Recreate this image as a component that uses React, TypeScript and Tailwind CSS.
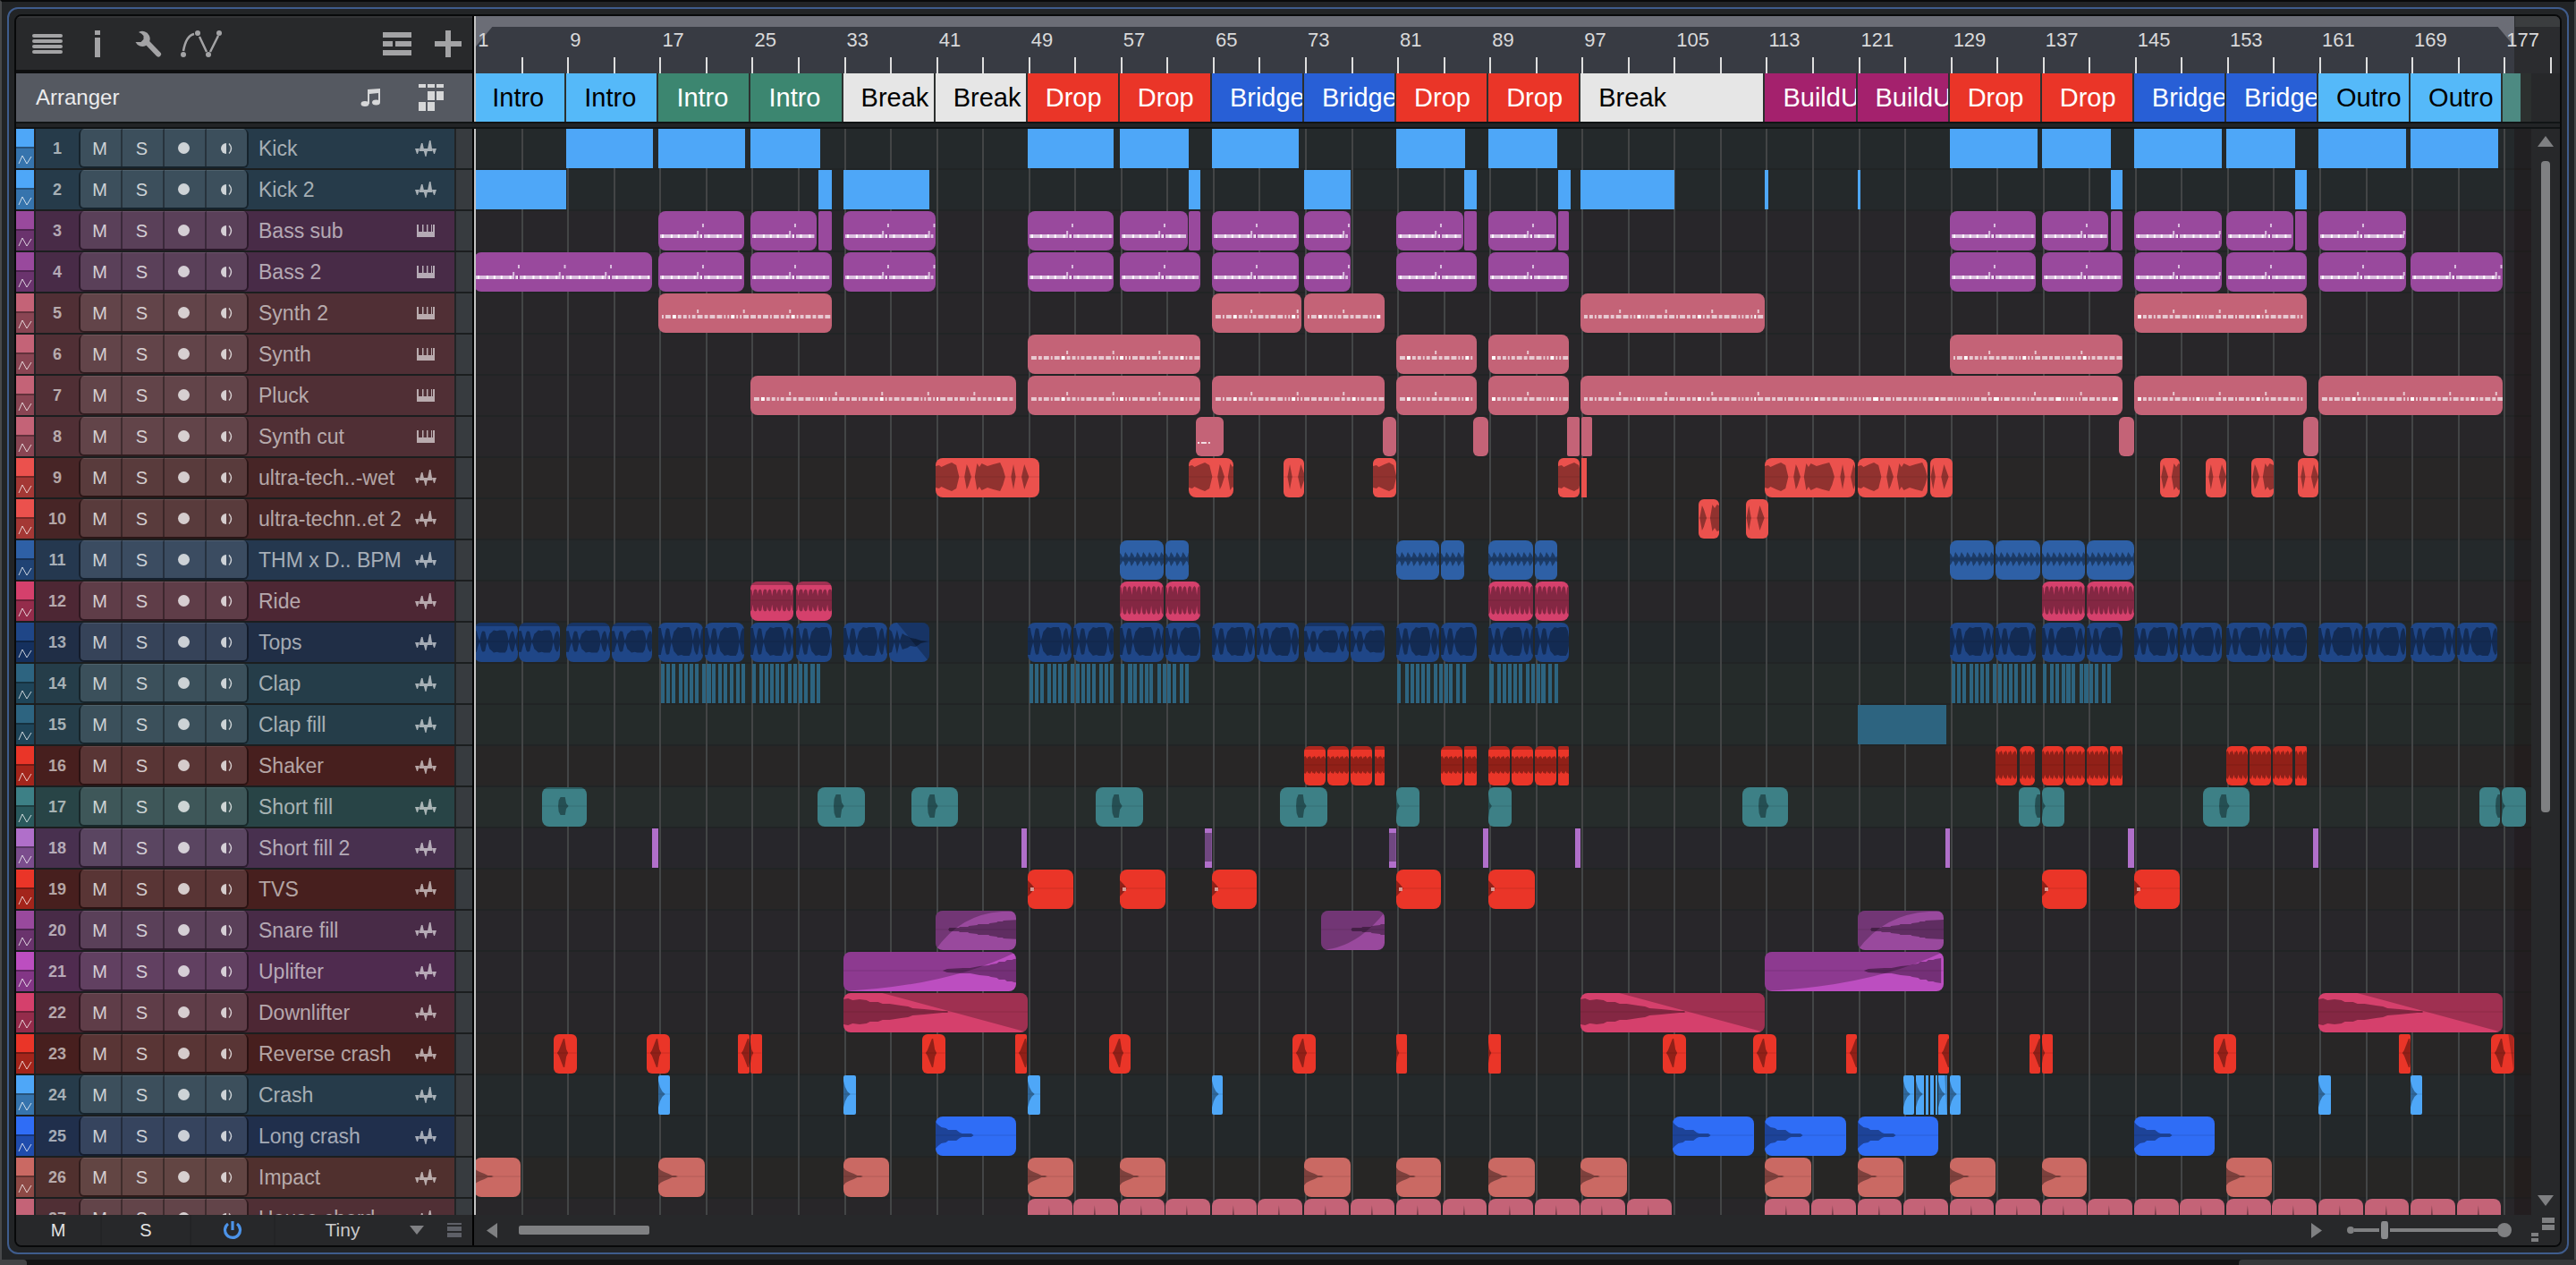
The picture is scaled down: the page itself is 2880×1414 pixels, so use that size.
import React, { useState } from "react";

type Shape =
  | "block"
  | "bass"
  | "synth"
  | "vox"
  | "pulse"
  | "ride"
  | "tops"
  | "shaker"
  | "shortFill"
  | "sliver"
  | "tvs"
  | "snare"
  | "uplifter"
  | "downlifter"
  | "reverse"
  | "crash"
  | "longCrash"
  | "impact"
  | "chord";

// start bar, end bar, variant, offset into the source in bars
type Clip = [number, number, string?, number?];

type Track = {
  name: string;
  tone: string;
  shape: Shape;
  midi?: boolean;
  clips: Clip[];
};

type Tone = { clip: string; head: string; lane: string };

const FIRST_BAR = 1.14;
const VISIBLE_BARS = 178.33;
const UNIT = 13; // drawing units per bar
const MID = 21;

const pos = (bar: number) => `${((bar - FIRST_BAR) / VISIBLE_BARS) * 100}%`;
const span = (bars: number) => `${(bars / VISIBLE_BARS) * 100}%`;

const tones: Record<string, Tone> = {
  sky: { clip: "bg-[#4ea7f8]", head: "bg-[#263b4a]", lane: "bg-[#24292b]" },
  purple: { clip: "bg-[#99499d]", head: "bg-[#482b47]", lane: "bg-[#28262a]" },
  pink: { clip: "bg-[#c46377]", head: "bg-[#502f35]", lane: "bg-[#282629]" },
  coral: { clip: "bg-[#eb514d]", head: "bg-[#472526]", lane: "bg-[#282626]" },
  denim: { clip: "bg-[#2e60a6]", head: "bg-[#25384f]", lane: "bg-[#24292b]" },
  rose: { clip: "bg-[#d5406c]", head: "bg-[#4d2734]", lane: "bg-[#282629]" },
  navy: { clip: "bg-[#1f4687]", head: "bg-[#202e46]", lane: "bg-[#23282a]" },
  steel: { clip: "bg-[#2d6480]", head: "bg-[#253d49]", lane: "bg-[#252b2a]" },
  red: { clip: "bg-[#ea3528]", head: "bg-[#471f1e]", lane: "bg-[#282626]" },
  teal: { clip: "bg-[#3d8086]", head: "bg-[#284446]", lane: "bg-[#262c2b]" },
  lilac: { clip: "bg-[#b06fca]", head: "bg-[#48304f]", lane: "bg-[#27262b]" },
  magenta: { clip: "bg-[#bc4ec0]", head: "bg-[#4f2b4f]", lane: "bg-[#28262a]" },
  royal: { clip: "bg-[#2f6df6]", head: "bg-[#202f4c]", lane: "bg-[#23282a]" },
  salmon: { clip: "bg-[#ca6963]", head: "bg-[#50302e]", lane: "bg-[#272625]" },
};

const clapA = [0.2, 0.65, 1.1, 1.75, 2.2, 2.65, 3.15, 3.75, 4.2, 4.65, 5.15, 5.6, 6.2, 6.7, 7.15];
const clapB = [0.1, 0.75, 1.2, 1.7, 2.15, 2.6, 3.25, 3.7, 4.15, 4.6, 5.2, 5.7];

const claps = (bar: number, offsets: number[]): Clip[] =>
  offsets.map((o) => [bar + o, bar + o + 0.32]);

const every4 = (from: number, to: number): Clip[] => {
  const out: Clip[] = [];
  for (let b = from; b <= to; b += 4) out.push([b, b + 3.87]);
  return out;
};

const tracks: Track[] = [
  {
    name: "Kick", tone: "sky", shape: "block",
    clips: [[9, 16.5], [17, 24.5], [25, 31], [49, 56.5], [57, 63], [65, 72.5], [81, 87], [89, 95], [129, 136.6], [137, 143], [145, 152.6], [153, 159], [161, 168.6], [169, 176.6]],
  },
  {
    name: "Kick 2", tone: "sky", shape: "block",
    clips: [[1, 9], [30.9, 32], [33, 40.5], [63, 64], [73, 77], [86.9, 88], [95, 96.1], [97, 105.1], [113, 113.3], [121, 121.3], [143, 144], [159, 160]],
  },
  {
    name: "Bass sub", tone: "purple", shape: "bass", midi: true,
    clips: [[17, 24.4], [25, 30.7], [30.9, 32, "plain"], [33, 41], [49, 56.5], [57, 62.9], [63, 64, "plain"], [65, 72.5], [73, 77], [81, 86.8], [86.9, 88, "plain"], [89, 94.9], [95, 96, "plain"], [129, 136.5], [137, 142.8], [143, 144, "plain"], [145, 152.6], [153, 158.8], [159, 160, "plain"], [161, 168.6]],
  },
  {
    name: "Bass 2", tone: "purple", shape: "bass", midi: true,
    clips: [[1, 16.4], [17, 24.4], [25, 32], [33, 41], [49, 56.5], [57, 64], [65, 72.5], [73, 77], [81, 88], [89, 96], [129, 136.5], [137, 144], [145, 152.6], [153, 160], [161, 168.6], [169, 177]],
  },
  {
    name: "Synth 2", tone: "pink", shape: "synth", midi: true,
    clips: [[17, 32], [65, 72.8], [73, 80], [97, 113], [145, 160]],
  },
  {
    name: "Synth", tone: "pink", shape: "synth", midi: true,
    clips: [[49, 64], [81, 88], [89, 96], [129, 144]],
  },
  {
    name: "Pluck", tone: "pink", shape: "synth", midi: true,
    clips: [[25, 48], [49, 64], [65, 80], [81, 88], [89, 96], [97, 144], [145, 160], [161, 177]],
  },
  {
    name: "Synth cut", tone: "pink", shape: "block", midi: true,
    clips: [[63.6, 66, "note"], [79.8, 81], [87.7, 89], [95.8, 96.9], [97.05, 98], [143.7, 145], [159.7, 161]],
  },
  {
    name: "ultra-tech..-wet", tone: "coral", shape: "vox",
    clips: [[41, 50], [63, 66.9], [71.2, 73, "", 6.2], [79, 81], [95, 96.9], [97.05, 97.5, "plain"], [113, 120.8], [121, 127.1], [127.3, 129.3, "", 6.5], [147.3, 149, "", 2.4], [151.2, 153, "", 6.3], [155.2, 157.1, "", 2.4], [159.2, 161, "", 6.3]],
  },
  {
    name: "ultra-techn..et 2", tone: "coral", shape: "vox",
    clips: [[107.2, 109, "", 2.4], [111.3, 113.3, "", 6.5]],
  },
  {
    name: "THM x D.. BPM", tone: "denim", shape: "pulse",
    clips: [[57, 60.85], [61, 63], [81, 84.75], [84.9, 86.9], [89, 92.85], [93, 95], [129, 132.85], [133, 136.85], [137, 140.75], [140.9, 145]],
  },
  {
    name: "Ride", tone: "rose", shape: "ride",
    clips: [[25, 28.7, "low"], [28.9, 32, "low"], [57, 60.85], [61, 64], [89, 92.85], [93, 96], [137, 140.75], [140.9, 145]],
  },
  {
    name: "Tops", tone: "navy", shape: "tops",
    clips: [[1, 4.75, "low"], [4.9, 8.4, "low"], [9, 12.75, "low"], [12.9, 16.4, "low"], [17, 20.85], [21, 24.4], [25, 28.7], [28.9, 32], [33, 36.85], [37, 40.5, "fade"], [49, 52.85], [53, 56.5], [57, 60.85], [61, 64], [65, 68.7], [68.9, 72.5], [73, 76.85, "low"], [77, 80, "low"], [81, 84.75], [84.9, 88], [89, 92.85], [93, 96], [129, 132.85], [133, 136.5], [137, 140.75], [140.9, 144], [145, 148.85], [149, 152.6], [153, 156.85], [157, 160], [161, 164.85], [165, 168.6], [169, 172.85], [173, 176.5]],
  },
  {
    name: "Clap", tone: "steel", shape: "block",
    clips: [...claps(17, clapA), ...claps(25, clapB), ...claps(49, clapA), ...claps(57, clapB), ...claps(81, clapB), ...claps(89, clapB), ...claps(129, clapA), ...claps(137, clapB)],
  },
  { name: "Clap fill", tone: "steel", shape: "block", clips: [[121, 128.7]] },
  {
    name: "Shaker", tone: "red", shape: "shaker",
    clips: [[73, 74.85, "low"], [75, 76.85, "low"], [77, 78.9, "low"], [79.1, 80, "low"], [84.9, 86.75, "low"], [86.9, 88, "low"], [89, 90.85, "low"], [91, 92.85, "low"], [93, 94.85, "low"], [95.05, 96, "low"], [133, 134.85], [135.05, 136.4], [137, 138.85], [139.05, 140.75], [140.9, 142.75], [142.95, 144], [153, 154.85], [155.05, 156.85], [157.05, 158.75], [158.95, 160]],
  },
  {
    name: "Short fill", tone: "teal", shape: "shortFill",
    clips: [[6.9, 10.8, "low"], [30.8, 34.9], [38.9, 43], [54.9, 59], [70.9, 75], [81, 83, "", 2], [89, 91, "", 2], [111, 115], [135, 136.85], [137, 139, "", 2], [151, 155], [175, 176.75], [176.9, 179, "", 2]],
  },
  {
    name: "Short fill 2", tone: "lilac", shape: "sliver",
    clips: [[16.45, 16.95], [48.45, 48.95], [64.4, 65, "dark"], [80.4, 81, "dark"], [88.5, 88.95], [96.55, 97], [128.65, 129], [144.5, 145], [160.5, 161]],
  },
  {
    name: "TVS", tone: "red", shape: "tvs",
    clips: [[49, 53], [57, 61], [65, 68.9], [81, 84.9], [89, 93], [137, 140.9], [145, 149]],
  },
  {
    name: "Snare fill", tone: "purple", shape: "snare",
    clips: [[41, 48], [74.5, 80, "late"], [121, 128.5]],
  },
  { name: "Uplifter", tone: "magenta", shape: "uplifter", clips: [[33, 48], [113, 128.5]] },
  { name: "Downlifter", tone: "rose", shape: "downlifter", clips: [[33, 49], [97, 113], [161, 177]] },
  {
    name: "Reverse crash", tone: "red", shape: "reverse",
    clips: [[7.9, 9.9], [16, 18], [23.9, 24.85], [25, 25.95, "", 1], [39.9, 41.9], [47.95, 48.95], [56.05, 57.95], [72, 74], [81, 81.9, "", 1], [89, 90.1, "", 1], [104.1, 106.1], [111.95, 113.95], [120, 120.95], [128, 128.95], [135.9, 136.85], [137, 137.95, "", 1], [151.9, 153.9], [167.95, 169], [176, 178, "fade"]],
  },
  {
    name: "Crash", tone: "sky", shape: "crash",
    clips: [[17, 18], [33, 34.1], [49, 50.1], [65, 65.95], [125, 125.9], [126.05, 126.8], [126.95, 127.15, "plain"], [127.3, 127.6, "plain"], [127.75, 127.95, "plain"], [128.05, 128.8, "fade"], [129, 129.95], [161, 162.1], [169, 170]],
  },
  {
    name: "Long crash", tone: "royal", shape: "longCrash",
    clips: [[41, 48], [105, 112], [113, 120], [121, 128], [145, 152]],
  },
  {
    name: "Impact", tone: "salmon", shape: "impact",
    clips: [[1, 5], [17, 21], [33, 37], [49, 53], [57, 61], [73, 77], [81, 84.9], [89, 93], [97, 101], [113, 117], [121, 125], [129, 133], [137, 140.9], [153, 157]],
  },
  { name: "House chord", tone: "pink", shape: "chord", clips: [...every4(49, 101), ...every4(113, 173)] },
];

const sections: [number, number, string, string][] = [
  [1, 9, "Intro", "bg-[#55b9f9] text-black"],
  [9, 17, "Intro", "bg-[#55b9f9] text-black"],
  [17, 25, "Intro", "bg-[#3c8670] text-white"],
  [25, 33, "Intro", "bg-[#3c8670] text-white"],
  [33, 41, "Break", "bg-[#e6e6e6] text-black"],
  [41, 49, "Break", "bg-[#e6e6e6] text-black"],
  [49, 57, "Drop", "bg-[#ea3528] text-white"],
  [57, 65, "Drop", "bg-[#ea3528] text-white"],
  [65, 73, "Bridge", "bg-[#285fd6] text-white"],
  [73, 81, "Bridge", "bg-[#285fd6] text-white"],
  [81, 89, "Drop", "bg-[#ea3528] text-white"],
  [89, 97, "Drop", "bg-[#ea3528] text-white"],
  [97, 113, "Break", "bg-[#e6e6e6] text-black"],
  [113, 121, "BuildUp", "bg-[#a4216d] text-white"],
  [121, 129, "BuildUp", "bg-[#a4216d] text-white"],
  [129, 137, "Drop", "bg-[#ea3528] text-white"],
  [137, 145, "Drop", "bg-[#ea3528] text-white"],
  [145, 153, "Bridge", "bg-[#285fd6] text-white"],
  [153, 161, "Bridge", "bg-[#285fd6] text-white"],
  [161, 169, "Outro", "bg-[#55b9f9] text-black"],
  [169, 177, "Outro", "bg-[#55b9f9] text-black"],
  [177, 178.2, "", "bg-[#4d8a82]"],
];

// amplitude envelopes: [bar, height above the centre line]
type Envelope = { period: number; pts: [number, number][] };

const envelopes: Partial<Record<Shape, Envelope>> = {
  vox: {
    period: 99,
    pts: [[0, 12], [0.3, 13], [0.5, 11], [1, 14], [1.4, 16], [1.8, 13], [2.05, 0], [2.5, 0], [2.7, 14], [2.85, 10], [3.1, 0], [3.4, 0], [3.6, 15], [3.8, 11], [4, 15], [4.5, 12], [5, 14], [5.6, 16], [5.85, 9], [6.05, 0], [6.55, 0], [6.75, 14], [6.95, 0], [7.45, 0], [7.7, 14], [8.1, 0]],
  },
  pulse: { period: 0.52, pts: [[0, 7], [0.12, 5], [0.24, 2], [0.36, 3], [0.44, 7], [0.52, 8]] },
  ride: { period: 0.84, pts: [[0, 16], [0.12, 14], [0.2, 6], [0.28, 14], [0.4, 16], [0.55, 15], [0.62, 9], [0.7, 14], [0.84, 16]] },
  tops: {
    period: 4,
    pts: [[0, 15], [0.22, 15], [0.32, 8], [0.48, 1], [0.65, 13], [0.75, 15], [0.95, 14], [1.05, 6], [1.15, 1], [1.35, 11], [1.5, 13], [1.7, 16], [2, 15], [2.2, 16], [2.7, 16], [2.85, 12], [3, 1], [3.15, 11], [3.3, 15], [3.42, 14], [3.6, 2], [3.75, 13], [3.85, 15], [4, 15]],
  },
  shaker: { period: 0.4, pts: [[0, 14], [0.08, 16], [0.16, 15], [0.26, 11], [0.34, 15], [0.4, 14]] },
  shortFill: { period: 99, pts: [[1.4, 0], [1.45, 8], [1.6, 13], [2, 13], [2.1, 4], [2.3, 0]] },
  tvs: { period: 99, pts: [[0, 9], [0.3, 5], [0.5, 2], [0.6, 0]] },
  snare: { period: 99, pts: [[1.1, 0], [1.2, 2], [2, 2], [2.1, 3], [2.8, 3], [2.9, 4], [3.6, 5], [3.7, 6], [4.6, 6], [4.7, 7], [5.3, 8], [5.4, 9], [5.8, 9], [5.9, 10], [7.5, 11]] },
  uplifter: { period: 99, pts: [[8.6, 0], [9, 2], [10.4, 3], [11, 3], [11.8, 5], [12.6, 6], [12.8, 7], [13.3, 8], [13.5, 10], [14, 10], [14.2, 12], [14.6, 12], [14.8, 13], [15.3, 14]] },
  downlifter: { period: 99, pts: [[0, 14], [0.4, 15], [0.8, 13], [1.4, 14], [2, 13], [2.3, 11], [3, 11], [3.4, 9], [4, 9], [4.5, 8], [5, 7], [5.6, 6], [6, 4], [7, 3], [7.8, 2], [8.6, 1], [9, 1], [9.1, 0]] },
  reverse: { period: 99, pts: [[0.3, 0], [0.45, 3], [0.85, 16], [0.95, 16], [1.1, 4], [1.25, 0]] },
  crash: { period: 99, pts: [[0, 15], [0.15, 8], [0.35, 3], [0.6, 0]] },
  longCrash: { period: 99, pts: [[0, 15], [0.2, 12], [0.5, 9], [0.9, 8], [1.1, 6], [1.8, 6], [2.1, 3], [2.3, 2], [3.1, 2], [3.3, 0]] },
  impact: { period: 99, pts: [[0, 10], [0.2, 7], [0.5, 5], [0.9, 3], [1.2, 1], [1.5, 1], [1.7, 0]] },
  chord: { period: 99, pts: [[1.75, 0], [1.85, 14], [1.95, 0]] },
};

const wavePath = (env: Envelope, len: number, offset: number, scale: number) => {
  const top: string[] = [];
  const bottom: string[] = [];
  for (let base = 0; base < len + offset; base += env.period) {
    env.pts.forEach(([x, a]) => {
      const px = ((base + x - offset) * UNIT).toFixed(1);
      top.push(`${px},${(MID - a * scale).toFixed(1)}`);
      bottom.unshift(`${px},${(MID + a * scale).toFixed(1)}`);
    });
  }
  return [...top, ...bottom].join(" ");
};

const BassNotes = ({ start, end }: { start: number; end: number }) => {
  const w = (end - start) * UNIT;
  const marks: React.ReactNode[] = [];
  for (let x = 4, i = 0; x < w - 4; x += i % 3 === 0 ? 10 : 8, i++) {
    marks.push(<rect key={`m${i}`} x={x} y={26} width={2} height={4} fill="#fff" />);
  }
  for (let b = Math.floor(start / 4) * 4; b < end; b += 4) {
    const low = (b + 0.35 - start) * UNIT;
    const high = (b + 0.8 - start) * UNIT;
    if (low > 0 && low < w - 2) {
      marks.push(<rect key={`l${b}`} x={low} y={22} width={2} height={4} fill="#dcc0e0" />);
      marks.push(<rect key={`g${b}`} x={low + 2} y={26} width={1} height={4} fill="#99499d" />);
    }
    if (high > 0 && high < w - 2) {
      marks.push(<rect key={`h${b}`} x={high} y={14} width={2} height={4} fill="#dcc0e0" />);
      marks.push(<rect key={`k${b}`} x={high} y={26} width={2} height={4} fill="#99499d" />);
    }
  }
  return (
    <>
      <rect x={2} y={26} width={w - 4} height={4} fill="#dcc0e0" />
      {marks}
    </>
  );
};

const noteWidths = [6, 4, 6, 2, 6, 4, 4, 4, 2, 4, 6, 4, 6, 6, 2, 2, 4, 2, 2, 6];

const SynthNotes = ({ start, end }: { start: number; end: number }) => {
  const w = (end - start) * UNIT;
  const marks: React.ReactNode[] = [];
  for (let x = 4, i = start % 7; x < w - 5; i++) {
    const n = noteWidths[i % noteWidths.length];
    marks.push(<rect key={x} x={x} y={24} width={n} height={4} fill={i % 11 === 5 ? "#fff" : "#e8c8d0"} />);
    x += n + 2;
  }
  for (let b = Math.floor(start / 4) * 4; b < end; b += 4) {
    const x = (b + 0.35 - start) * UNIT;
    const silent = b > 112 && b < 132 && end - start > 40;
    if (x > 0 && x < w - 2 && !silent) {
      marks.push(<rect key={`b${b}`} x={x} y={18} width={2} height={4} fill="#e8c8d0" />);
    }
  }
  return <>{marks}</>;
};

const Fade = ({ shape, variant, w }: { shape: Shape; variant: string; w: number }) => {
  let d = "";
  if (shape === "snare") {
    d = variant === "late" ? `M0 44Q${w * 0.55} 42 ${w} 2V0H0z` : `M0 44Q${w * 0.3} 4 ${w * 0.82} 1H${w}V0H0z`;
  } else if (shape === "uplifter") d = `M0 44Q${w * 0.6} 38 ${w} 0H0z`;
  else if (shape === "downlifter") d = `M${w * 0.21} 0L${w} 44V0z`;
  else if (shape === "tops") d = `M9 0L${w} 44V0z`;
  else if (variant === "fade") d = `M${w * 0.75} 0L${w} 44V0z`;
  return <path d={d} fill="#000" fillOpacity={0.25} />;
};

const ClipView = ({ clip, track }: { clip: Clip; track: Track }) => {
  const [start, end, variant = "", offset = 0] = clip;
  const len = end - start;
  const w = len * UNIT;
  const { shape } = track;
  const env = envelopes[shape];
  let scale = 1;
  if (variant === "low") scale = shape === "shaker" ? 0.62 : 0.78;

  let radius = "rounded-lg";
  if (len < 0.8) radius = "rounded-none";
  else if (len < 1.2) radius = "rounded-xs";
  else if (len < 3) radius = "rounded-md";
  if (shape === "block" && !track.midi) radius = "rounded-none";

  return (
    <div
      className={`absolute top-0 z-10 h-11 overflow-hidden ${radius} ${tones[track.tone].clip}`}
      style={{ left: pos(start), width: span(len) }}
    >
      {variant !== "plain" && (
        <svg viewBox={`0 0 ${w} 44`} preserveAspectRatio="none" className="block h-full w-full" aria-hidden="true">
          {shape === "bass" && <BassNotes start={start} end={end} />}
          {shape === "synth" && <SynthNotes start={start} end={end} />}
          {variant === "note" && <path d="M2 28h2v2h-2zM6 28h6v2h-6zM14 28h2v2h-2z" fill="#f3dde2" />}
          {variant === "dark" && <rect y={5} width={w} height={32} fill="#000" fillOpacity={0.36} />}
          {env && (
            <>
              <rect y={MID - 0.5} width={w} height={1} fill="#000" fillOpacity={0.12} />
              <polygon
                points={
                  shape === "tops" && variant === "fade"
                    ? "0,7 3,10 6,20 9,8 12,20 15,12 18,14 21,15 24,17 30,18 36,20 44,21 36,23 30,27 24,26 21,28 15,30 12,22 9,35 6,22 3,33 0,34"
                    : wavePath(env, len, variant === "late" ? -1.5 : offset, scale)
                }
                fill="#000"
                fillOpacity={0.38}
              />
            </>
          )}
          {shape === "tvs" && <rect x={3} y={20} width={4} height={4} fill="#d59a94" />}
          {variant === "low" && <rect width={w} height={shape === "shortFill" ? 2 : 4} fill="#000" fillOpacity={0.25} />}
          <Fade shape={shape === "tops" && variant !== "fade" ? "block" : shape} variant={variant} w={w} />
        </svg>
      )}
    </div>
  );
};

const WaveIcon = () => (
  <svg viewBox="0 0 24 18" className="h-[18px] w-6" fill="currentColor" aria-hidden="true">
    <path d="M0 9h5L3 15H2zM4.500 12L7 3h1.500L10.500 12zM9 9h5.500L12.500 18h-1zM13.500 12L16 0h1.500L19.500 12zM19 9h5L22 15h-1z" />
  </svg>
);

const KeysIcon = () => (
  <svg viewBox="0 0 20 14" className="h-[14px] w-5" fill="currentColor" aria-hidden="true">
    <path d="M0 0h2v8h4V0h1.500v8h3.500V0h1.500v8h3.500V0H17v8h1V0h2v14H0z" />
  </svg>
);

const ToggleButton = ({ label, children }: { label: string; children: React.ReactNode }) => {
  const [on, setOn] = useState(false);
  return (
    <button
      aria-label={label}
      aria-pressed={on}
      onClick={() => setOn(!on)}
      className="flex flex-1 items-center justify-center border-t border-r-2 border-black/35 border-t-white/10 bg-white/10 pr-0.5 text-[20px] leading-none text-white/75 last:border-r-0"
    >
      {children}
    </button>
  );
};

const TrackHeader = ({ track, index }: { track: Track; index: number }) => {
  const tone = tones[track.tone];
  return (
    <div className="flex h-[46px] shrink-0 border-b-2 border-[#1b1e1f]">
      <div className={`flex w-5 flex-col ${tone.clip}`}>
        <div className="h-5" />
        <div className="h-0.5 bg-black/50" />
        <div className="flex flex-1 items-center justify-center bg-black/30">
          <svg viewBox="0 0 16 12" className="mt-1 h-3 w-4" fill="none" stroke="white" strokeOpacity={0.75} strokeWidth={1} aria-hidden="true">
            <path d="M1 10L5 1l5 9 5-8" />
          </svg>
        </div>
      </div>
      <div className={`ml-0.5 flex flex-1 items-center ${tone.head}`}>
        <span className="w-12 text-center text-[18px] leading-[44px] font-bold text-white/60">{index}</span>
        <div className="flex h-full w-[190px] overflow-hidden rounded-md border-x-2 border-b-2 border-black/40">
          <ToggleButton label={`Mute ${track.name}`}>M</ToggleButton>
          <ToggleButton label={`Solo ${track.name}`}>S</ToggleButton>
          <ToggleButton label={`Record ${track.name}`}>
            <span className="size-[13px] rounded-full bg-white/75" />
          </ToggleButton>
          <ToggleButton label={`Monitor ${track.name}`}>
            <svg viewBox="0 0 14 14" className="size-[14px]" aria-hidden="true">
              <path d="M7 1a6 6 0 0 0 0 12z" fill="currentColor" />
              <path d="M10 1.500q5 5.500 0 11" fill="none" stroke="currentColor" strokeWidth={1.400} />
            </svg>
          </ToggleButton>
        </div>
        <span className="ml-[11px] flex-1 text-[23px] leading-[44px] whitespace-nowrap text-white/60">{track.name}</span>
        <span className="mr-5 flex w-6 justify-center text-white/60">{track.midi ? <KeysIcon /> : <WaveIcon />}</span>
      </div>
      <div className="ml-0.5 w-[18px] bg-[#373b3f]" />
    </div>
  );
};

const ToolButton = ({ label, className, children }: { label: string; className: string; children: React.ReactNode }) => (
  <button aria-label={label} className={`shrink-0 text-[#a3a3a5] ${className}`}>
    {children}
  </button>
);

const Toolbar = () => (
  <div className="flex h-[60px] items-center border-t-2 border-[#343537] bg-[#28292b] pr-3 pl-[18px]">
    <ToolButton label="Menu" className="w-[34px]">
      <svg viewBox="0 0 34 24" className="h-6 w-full" fill="currentColor">
        <rect width="34" height="4" rx="2" y="1" />
        <rect width="34" height="4" rx="2" y="7" />
        <rect width="34" height="4" rx="2" y="13" />
        <rect width="34" height="4" rx="2" y="19" />
      </svg>
    </ToolButton>
    <ToolButton label="Inspector" className="ml-9 w-[6px]">
      <svg viewBox="0 0 6 30" className="h-[30px] w-full" fill="currentColor">
        <path d="M0 0h6v5H0zM0 8h6v22H0z" />
      </svg>
    </ToolButton>
    <ToolButton label="Options" className="ml-[39px] w-[30px]">
      <svg viewBox="0 0 30 30" className="h-[30px] w-full">
        <path d="M13 13L26 26.500" stroke="currentColor" strokeWidth="6" strokeLinecap="round" />
        <path d="M4 2a8.500 8.500 0 1 1-3.500 11h6l3-3V6L7 3.500z" fill="currentColor" />
      </svg>
    </ToolButton>
    <ToolButton label="Automation" className="ml-[21px] w-[46px]">
      <svg viewBox="0 0 46 30" className="h-[30px] w-full" fill="currentColor">
        <path d="M3 23Q6 6 15 4M21 7l8 17M33 24L42 6" fill="none" stroke="currentColor" strokeWidth="2.500" />
        <circle cx="3" cy="27" r="3" />
        <circle cx="19" cy="3" r="3" />
        <circle cx="31" cy="27" r="3" />
        <circle cx="43" cy="3" r="3" />
      </svg>
    </ToolButton>
    <div className="flex-1" />
    <ToolButton label="Track list" className="w-8">
      <svg viewBox="0 0 32 26" className="h-[26px] w-full" fill="currentColor">
        <path d="M0 0h32v6H0zM0 10h11v6H0zM14 10h18v6H14zM0 20h32v6H0z" />
      </svg>
    </ToolButton>
    <ToolButton label="Add track" className="ml-[26px] w-[30px]">
      <svg viewBox="0 0 30 30" className="h-[30px] w-full" fill="currentColor">
        <path d="M12 0h6v12h12v6H18v12h-6V18H0v-6h12z" />
      </svg>
    </ToolButton>
  </div>
);

const Ruler = () => {
  const labels = Array.from({ length: 23 }, (_, i) => 1 + i * 8);
  const ticks = Array.from({ length: 45 }, (_, i) => 5 + i * 4);
  return (
    <div className="h-16 bg-[#2b2c2f]">
      <div className="relative mr-8 h-full">
        <div className="absolute inset-y-0 left-0 border-t-[12px] border-[#6b6d76] bg-[#383b43]" style={{ width: pos(178) }}>
          <svg viewBox="0 0 20 24" className="absolute -top-0.5 left-0 h-6 w-5" aria-hidden="true">
            <path d="M0 0h20L0 24z" fill="#6b6d76" />
          </svg>
          <svg viewBox="0 0 20 24" className="absolute -top-0.5 right-0 h-6 w-5" aria-hidden="true">
            <path d="M20 0H0l20 24z" fill="#6b6d76" />
          </svg>
        </div>
        <div className="absolute top-0 left-full -mr-8 -ml-[18px] h-3 w-[50px] bg-[#3b3d3f]" />
        {labels.map((b) => (
          <span key={b} className="absolute top-[15px] ml-1 text-[22px] leading-6 text-[#d9d9da]" style={{ left: pos(b) }}>
            {b}
          </span>
        ))}
        {ticks.map((b) => (
          <span key={b} className="absolute bottom-0 ml-px h-[18px] w-0.5 bg-[#dedede]" style={{ left: pos(b) }} />
        ))}
      </div>
    </div>
  );
};

const Footer = () => (
  <div className="flex h-[34px] shrink-0 bg-[#27282a]">
    <div className="flex w-[510px] items-center text-[20px] text-[#e2e2e3]">
      <button className="h-full w-[96px] border-r-2 border-[#232426]">M</button>
      <button className="h-full w-[100px] border-r-2 border-[#232426]">S</button>
      <button aria-label="Enable automation" className="flex h-full w-[94px] items-center justify-center border-r-2 border-[#232426] text-[#4c93e8]">
        <svg viewBox="0 0 22 22" className="size-[22px]" fill="none" stroke="currentColor" strokeWidth={3.200}>
          <path d="M6 4a8.500 8.500 0 1 0 10 0M11 1v10" />
        </svg>
      </button>
      <label htmlFor="track-height" className="sr-only">Track height</label>
      <select id="track-height" defaultValue="Tiny" className="w-[150px] appearance-none bg-transparent text-center text-[21px] text-[#c9c9ca] outline-none">
        <option>Tiny</option>
        <option>Small</option>
        <option>Normal</option>
        <option>Large</option>
      </select>
      <svg viewBox="0 0 16 10" className="h-[10px] w-4" aria-hidden="true">
        <path d="M0 0h16L8 10z" fill="#808184" />
      </svg>
      <svg viewBox="0 0 16 16" className="ml-[26px] size-4" fill="#5e6067" aria-hidden="true">
        <path d="M0 0h16v2H0zM0 4h16v5H0zM0 11h16v5H0z" />
      </svg>
    </div>
    <div className="flex flex-1 items-center border-l-2 border-black pr-[6px] pl-[14px]">
      <button aria-label="Scroll left" className="w-3">
        <svg viewBox="0 0 12 17" className="h-[17px] w-full" fill="#7f8082">
          <path d="M12 0v17L0 8.500z" />
        </svg>
      </button>
      <div className="ml-6 flex-1">
        <div className="h-[10px] w-[146px] rounded-xs bg-[#7f8082]" />
      </div>
      <button aria-label="Scroll right" className="w-3">
        <svg viewBox="0 0 12 17" className="h-[17px] w-full" fill="#7f8082">
          <path d="M0 0v17l12-8.500z" />
        </svg>
      </button>
      <span className="ml-7 size-2 rounded-full bg-[#7f8082]" />
      <input
        type="range"
        aria-label="Horizontal zoom"
        min={0}
        max={100}
        defaultValue={19}
        className="h-5 w-[160px] appearance-none bg-[linear-gradient(#7f8082,#7f8082)] bg-[length:100%_4px] bg-center bg-no-repeat [&::-webkit-slider-thumb]:h-5 [&::-webkit-slider-thumb]:w-3 [&::-webkit-slider-thumb]:appearance-none [&::-webkit-slider-thumb]:rounded-sm [&::-webkit-slider-thumb]:border-x-2 [&::-webkit-slider-thumb]:border-[#27282a] [&::-webkit-slider-thumb]:bg-[#8a8b8d]"
      />
      <span className="size-4 rounded-full bg-[#7f8082]" />
      <svg viewBox="0 0 26 28" className="ml-[22px] h-7 w-[26px]" fill="#7f8082" aria-hidden="true">
        <path d="M12 0h14v6H12zM12 8h14v6H12zM0 17h8v4H0zM0 23h8v4H0z" />
      </svg>
    </div>
  </div>
);

const App: React.FC = () => {
  const gridBars = Array.from({ length: 44 }, (_, i) => 5 + i * 4);

  return (
    <div className="flex h-screen w-full flex-col overflow-hidden bg-[#222426] font-['Liberation_Sans',Arial,sans-serif]">
      <div className="flex min-h-0 flex-1 flex-col border-x-2 border-t-2 border-x-[#47484a] border-t-[#090a0b] p-1.5">
        <div className="flex min-h-0 flex-1 flex-col rounded-xl border-2 border-[#3f5c8c] p-1.5">
          <div className="flex min-h-0 flex-1 flex-col overflow-hidden rounded-lg border-2 border-[#08090a] bg-[#27282a]">
            {/* toolbar and arranger track */}
            <div className="flex shrink-0">
              <div className="w-[510px]">
                <Toolbar />
                <div className="flex h-[58px] items-center border-t-4 border-[#0e0f10] bg-[#555961] pr-8 pl-[22px]">
                  <span className="flex-1 text-[24px] leading-none text-[#ebebec]">Arranger</span>
                  <svg viewBox="0 0 22 20" className="h-5 w-[22px] text-[#d6d7d8]" fill="currentColor" aria-hidden="true">
                    <path d="M8 1l14-1v15h-2V5L10 6v11H8z" />
                    <ellipse cx="5" cy="17" rx="4.500" ry="3" />
                    <ellipse cx="17.500" cy="15.500" rx="4.500" ry="3" />
                  </svg>
                  <svg viewBox="0 0 28 30" className="ml-[43px] h-[30px] w-7 text-[#d6d7d8]" fill="currentColor" aria-hidden="true">
                    <path d="M0 0h8v4H0zM10 0h8v4h-8zM20 0h8v4h-8zM10 8h8v10h-8zM20 8h8v10h-8zM0 20h8v10H0zM10 20h8v10h-8z" />
                  </svg>
                </div>
              </div>
              <div className="flex-1 border-l-2 border-black">
                <div className="border-l-2 border-[#c3c3c3]">
                  <Ruler />
                  <div className="relative mr-8 h-[54px] overflow-hidden bg-[#2c302f]">
                    {sections.map(([start, end, label, color]) => (
                      <div key={start} className="absolute inset-y-0 pr-0.5" style={{ left: pos(start), width: span(end - start) }}>
                        <div className={`h-full overflow-hidden pl-5 text-[29px] leading-[54px] ${color}`}>{label}</div>
                      </div>
                    ))}
                  </div>
                </div>
              </div>
            </div>
            <div className="h-2 shrink-0 border-y-2 border-[#111415] bg-[#222426]" />

            {/* track list and lanes */}
            <div className="flex min-h-0 flex-1 overflow-hidden">
              <div className="flex w-[510px] flex-col bg-[#222426]">
                {tracks.map((t, i) => (
                  <TrackHeader key={t.name} track={t} index={i + 1} />
                ))}
              </div>
              <div className="flex flex-1 border-l-2 border-black">
                <div className="w-0.5 bg-[#c3c3c3]" />
                <div className="relative flex flex-1 flex-col overflow-hidden">
                  {tracks.map((t) => (
                    <div key={t.name} className={`relative h-[46px] shrink-0 border-b-2 border-[#212425] ${tones[t.tone].lane}`}>
                      {t.clips.map((c) => (
                        <ClipView key={c[0]} clip={c} track={t} />
                      ))}
                    </div>
                  ))}
                  {gridBars.map((b) => (
                    <div key={b} className="absolute inset-y-0 ml-px w-0.5 bg-[#434546]" style={{ left: pos(b) }} />
                  ))}
                  <div className="absolute inset-y-0 right-0 bg-[#1a0d0d]/30" style={{ left: pos(178) }} />
                </div>
                <div className="flex w-8 flex-col items-center bg-[#27282a] pt-2 pb-[10px]">
                  <button aria-label="Scroll up">
                    <svg viewBox="0 0 18 12" className="h-3 w-[18px]" fill="#7f8082">
                      <path d="M9 0l9 12H0z" />
                    </svg>
                  </button>
                  <div className="mt-4 w-full flex-1">
                    <div className="mx-auto h-[63%] w-[10px] rounded-sm bg-[#7f8082]" />
                  </div>
                  <button aria-label="Scroll down">
                    <svg viewBox="0 0 18 12" className="h-3 w-[18px]" fill="#7f8082">
                      <path d="M9 12L0 0h18z" />
                    </svg>
                  </button>
                </div>
              </div>
            </div>

            <Footer />
          </div>
        </div>
      </div>
      <div className="flex h-1.5 shrink-0 justify-between bg-[#131314]">
        <div className="w-[30px] rounded-tr-sm bg-[#424345]" />
        <div className="w-[377px] rounded-tl-sm bg-[#353638]" />
      </div>
    </div>
  );
};

export default App;
